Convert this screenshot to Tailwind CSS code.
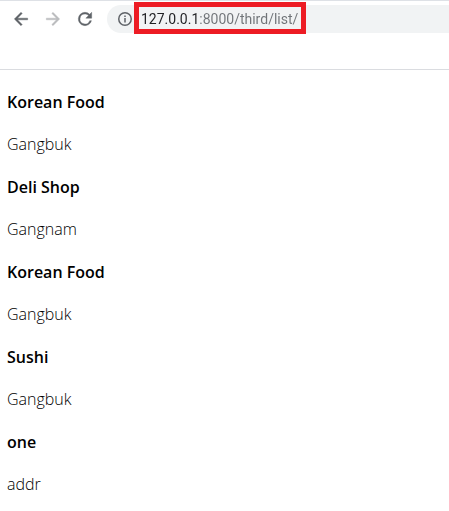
<!DOCTYPE html>
<html lang="en">
<head>
  <meta charset="UTF-8" />
  <meta name="viewport" content="width=device-width, initial-scale=1.0" />
  <title>Shop List</title>
  <script src="https://cdn.jsdelivr.net/npm/@tailwindcss/browser@4"></script>
</head>
<body class="bg-white text-black font-['Open_Sans','Noto_Sans_CJK_KR',sans-serif]">

  <!-- Browser toolbar -->
  <header class="h-[70px] border-t border-t-[#dee1e6] border-b border-b-[#dadce0] pt-1">
    <div class="flex items-center h-7 pl-[11px]">
      <nav class="flex gap-3 mr-3 text-[#5f6368]">
        <button type="button" aria-label="Back" class="size-5">
          <svg class="size-5" viewBox="0 0 24 24" fill="currentColor" stroke="currentColor" stroke-width="0.5"><path d="M20 11H7.83l5.59-5.59L12 4l-8 8 8 8 1.41-1.41L7.83 13H20v-2z" /></svg>
        </button>
        <button type="button" aria-label="Forward" class="size-5 text-[#babcbe]" disabled>
          <svg class="size-5" viewBox="0 0 24 24" fill="currentColor" stroke="currentColor" stroke-width="0.5"><path d="M12 4l-1.41 1.41L16.17 11H4v2h12.17l-5.58 5.59L12 20l8-8z" /></svg>
        </button>
        <button type="button" aria-label="Reload" class="size-5">
          <svg class="size-5" viewBox="0 0 24 24" fill="currentColor" stroke="currentColor" stroke-width="0.5"><path d="M17.65 6.35A7.96 7.96 0 0 0 12 4a8 8 0 1 0 7.73 10h-2.08A6 6 0 1 1 12 6c1.66 0 3.14.69 4.22 1.78L13 11h7V4l-2.35 2.35z" /></svg>
        </button>
      </nav>
      <div class="relative flex flex-1 items-center h-7 rounded-l-full bg-[#f1f3f4] pl-[10px]">
        <svg class="size-4 text-[#5f6368]" viewBox="0 0 16 16" fill="none" stroke="currentColor" stroke-width="1.5">
          <circle cx="8" cy="8" r="6.25" />
          <path d="M8 7v4.5M8 4.5V6" />
        </svg>
        <input type="text" aria-label="Address" value="127.0.0.1:8000/third/list/" class="flex-1 min-w-0 ml-2 h-7 font-[Roboto,sans-serif] text-sm text-transparent bg-clip-text bg-linear-to-r from-[#202124] from-[58px] to-[#707478] to-[58px] outline-none" />
        <!-- Highlight around the URL -->
        <div class="absolute left-[27px] -top-[3px] w-[172px] h-8 border-5 border-[#ed1c24] pointer-events-none"></div>
      </div>
    </div>
  </header>

  <!-- Shop list -->
  <main class="flex flex-col gap-4 px-[7px] pt-[19px] text-base">
    <p class="font-semibold leading-[26px]">Korean Food</p>
    <p class="font-light leading-[27px]">Gangbuk</p>
    <p class="font-semibold leading-[26px]">Deli Shop</p>
    <p class="font-light leading-[27px]">Gangnam</p>
    <p class="font-semibold leading-[26px]">Korean Food</p>
    <p class="font-light leading-[27px]">Gangbuk</p>
    <p class="font-semibold leading-[26px]">Sushi</p>
    <p class="font-light leading-[27px]">Gangbuk</p>
    <p class="font-semibold leading-[26px]">one</p>
    <p class="font-light leading-[27px]">addr</p>
  </main>

</body>
</html>
